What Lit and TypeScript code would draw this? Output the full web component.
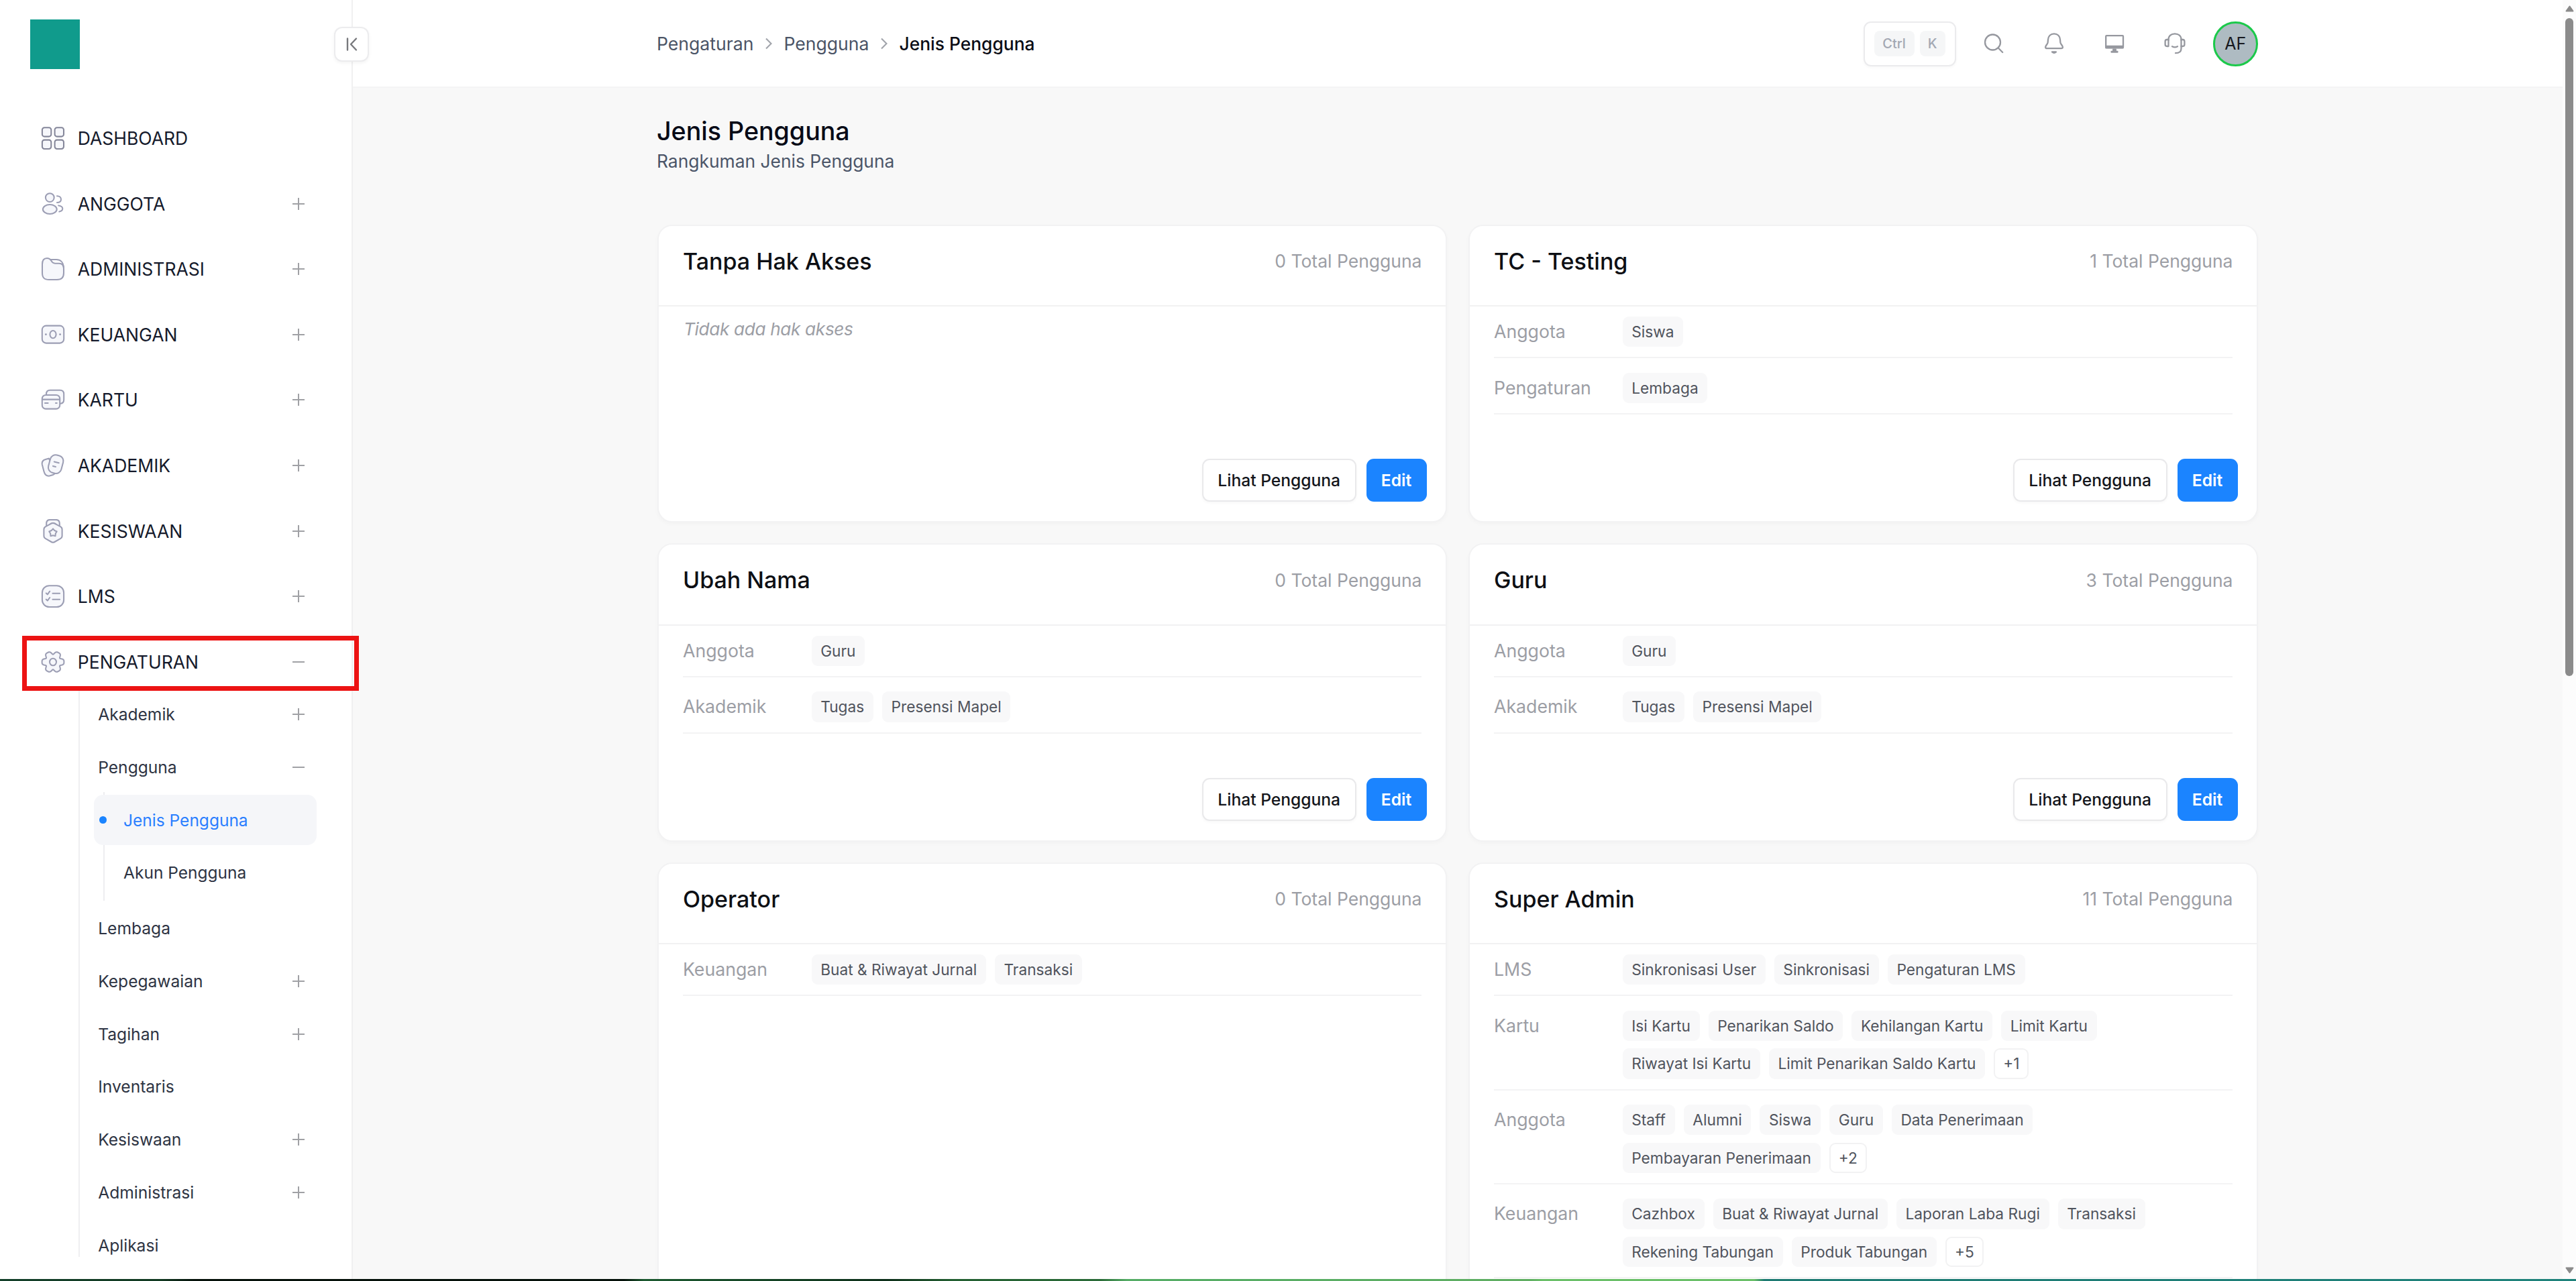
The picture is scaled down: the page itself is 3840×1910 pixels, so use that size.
import { LitElement, html, svg, css, nothing } from "lit";
import { customElement, property } from "lit/decorators.js";
import { classMap } from "lit/directives/class-map.js";

interface Access {
  label: string;
  chips: string[];
  more?: number;
}

interface Role {
  name: string;
  total: number;
  access: Access[];
  collapsed?: boolean;
}

interface MenuEntry {
  label: string;
  icon: string;
  state: "none" | "closed" | "open";
}

// Six-lobed outline for the settings icon
const gearPoints = Array.from({ length: 96 }, (_, i) => {
  const a = (i / 96) * Math.PI * 2;
  const r = 14.3 + 2.3 * Math.cos(6 * a) - 0.7 * Math.cos(12 * a);
  return `${(18 + r * 1.03 * Math.cos(a)).toFixed(2)},${(18 + r * Math.sin(a)).toFixed(2)}`;
}).join(" ");

const starPoints = Array.from({ length: 10 }, (_, i) => {
  const a = (i / 10) * Math.PI * 2 - Math.PI / 2;
  const r = i % 2 ? 4 : 6;
  return `${(18 + r * Math.cos(a)).toFixed(2)},${(20.3 + r * Math.sin(a)).toFixed(2)}`;
}).join(" ");

const icons: Record<string, unknown> = {
  dashboard: svg`<g stroke="#85879a">
    <rect x="1.9" y="2.2" width="13.4" height="13.4" rx="3.4"/><rect x="20.6" y="2.2" width="13.4" height="13.4" rx="3.4"/>
    <rect x="1.9" y="20.6" width="13.4" height="13.4" rx="3.4"/><rect x="20.6" y="20.6" width="13.4" height="13.4" rx="3.4"/></g>`,
  users: svg`<circle cx="13.3" cy="8.6" r="6.4"/><ellipse cx="13.3" cy="26" rx="10.4" ry="7"/>
    <path fill="none" d="M24 6.2c3.6 0 6 2.1 6 5s-2.4 4.8-6 4.8"/>
    <path fill="none" d="M26.2 20.4c3.8.5 6.1 2.2 6.1 4.7s-2.1 4-5 4.5"/>`,
  folder: svg`<path d="M2 11C2 4.5 4.5 2 9 2c3.5 0 4.7 1 6.2 3.6C17 8.7 18 9.7 21 9.7h6c5 0 7 3 7 8V24c0 7-3 10-10 10H12C5 34 2 31 2 24z"/>
    <path fill="none" d="M14.5 4H23c6 0 10.5 4 10.9 12"/>`,
  money: svg`<rect x="1.8" y="4.6" width="32.4" height="26" rx="6"/><ellipse cx="18" cy="17.6" rx="4.6" ry="5.6"/>
    <path d="M7.2 17.6h.4M28.4 17.6h.4" stroke-width="2.6"/>`,
  cards: svg`<path d="M8 11V9.5C8 5.5 10 3.7 13.5 3.7h15c3.8 0 5.7 2 5.7 5.8V18c0 3.5-1.6 5.4-5 5.8z"/>
    <rect x="1.8" y="11" width="26.4" height="20.6" rx="5.4"/><path d="M2 17.6h26"/>
    <path d="M6 23h4.6M22 23h1.8"/>`,
  notes: svg`<path d="M12 7.5 6.8 8.9C2.5 10.2 1 13 1.9 17l2.6 10c1.5 5.5 4.5 7.2 8.5 6.6 3.5-.5 6-1.6 8-3.6z"/>
    <rect x="12.3" y="2.6" width="19.8" height="27" rx="8" transform="rotate(15 22.2 16.1)"/>
    <path d="M19.8 12.6l7 1.7M18 18.9l4 1.1"/>`,
  medal: svg`<path d="M8.2 11V6.5C8.2 2.6 10 .9 13.8.9h8.4c3.8 0 5.6 1.7 5.6 5.6V11z"/>
    <path fill="none" d="M13.5 8c1-2.6 8-2.6 9 0"/>
    <path d="M15.5 6.6q2.5-1.4 5 0L29 11.2q2.6 1.4 2.6 4.2V25q0 2.7-2.6 4.2L20.5 34q-2.5 1.4-5 0L7 29.2Q4.4 27.7 4.4 25v-9.6q0-2.8 2.6-4.2z"/>
    <polygon points="${starPoints}"/>`,
  checklist: svg`<rect x="1.9" y="2.2" width="32.2" height="31.8" rx="10.5"/>
    <path fill="none" d="M7.8 13.4l2 1.9 3.4-4.6M7.8 22.7l2 1.9 3.4-4.6M17.5 13.7h10.6M17.5 22.7h10.6"/>`,
  gear: svg`<polygon points="${gearPoints}"/><ellipse cx="18" cy="18" rx="5" ry="5.3"/>`,
};

const menu: MenuEntry[] = [
  { label: "DASHBOARD", icon: "dashboard", state: "none" },
  { label: "ANGGOTA", icon: "users", state: "closed" },
  { label: "ADMINISTRASI", icon: "folder", state: "closed" },
  { label: "KEUANGAN", icon: "money", state: "closed" },
  { label: "KARTU", icon: "cards", state: "closed" },
  { label: "AKADEMIK", icon: "notes", state: "closed" },
  { label: "KESISWAAN", icon: "medal", state: "closed" },
  { label: "LMS", icon: "checklist", state: "closed" },
  { label: "PENGATURAN", icon: "gear", state: "open" },
];

const submenu: { label: string; state: MenuEntry["state"]; children?: string[] }[] = [
  { label: "Akademik", state: "closed" },
  { label: "Pengguna", state: "open", children: ["Jenis Pengguna", "Akun Pengguna"] },
  { label: "Lembaga", state: "none" },
  { label: "Kepegawaian", state: "closed" },
  { label: "Tagihan", state: "closed" },
  { label: "Inventaris", state: "none" },
  { label: "Kesiswaan", state: "closed" },
  { label: "Administrasi", state: "closed" },
  { label: "Aplikasi", state: "none" },
];

const guruAccess: Access[] = [
  { label: "Anggota", chips: ["Guru"] },
  { label: "Akademik", chips: ["Tugas", "Presensi Mapel"] },
];

const roles: Role[] = [
  { name: "Tanpa Hak Akses", total: 0, access: [] },
  {
    name: "TC - Testing",
    total: 1,
    access: [
      { label: "Anggota", chips: ["Siswa"] },
      { label: "Pengaturan", chips: ["Lembaga"] },
    ],
  },
  { name: "Ubah Nama", total: 0, access: guruAccess },
  { name: "Guru", total: 3, access: guruAccess },
  {
    name: "Operator",
    total: 0,
    collapsed: true,
    access: [{ label: "Keuangan", chips: ["Buat & Riwayat Jurnal", "Transaksi"] }],
  },
  {
    name: "Super Admin",
    total: 11,
    collapsed: true,
    access: [
      { label: "LMS", chips: ["Sinkronisasi User", "Sinkronisasi", "Pengaturan LMS"] },
      {
        label: "Kartu",
        chips: ["Isi Kartu", "Penarikan Saldo", "Kehilangan Kartu", "Limit Kartu", "Riwayat Isi Kartu", "Limit Penarikan Saldo Kartu"],
        more: 1,
      },
      { label: "Anggota", chips: ["Staff", "Alumni", "Siswa", "Guru", "Data Penerimaan", "Pembayaran Penerimaan"], more: 2 },
      {
        label: "Keuangan",
        chips: ["Cazhbox", "Buat & Riwayat Jurnal", "Laporan Laba Rugi", "Transaksi", "Rekening Tabungan", "Produk Tabungan"],
        more: 5,
      },
    ],
  },
];

const toggleSign = (state: MenuEntry["state"]) =>
  state === "none"
    ? nothing
    : html`<svg class="sign" viewBox="0 0 18 18" width="18" height="18">
        <path d="${state === "closed" ? "M0 9h18M9 0v18" : "M0 9h18"}" stroke="#a0a1a5" stroke-width="2" />
      </svg>`;

@customElement("side-nav")
class SideNav extends LitElement {
  static styles = css`
    :host {
      display: block;
      position: relative;
      flex: none;
      box-sizing: border-box;
      width: 526px;
      border-right: 2px solid #f0f0f1;
      background: #fff;
    }
    svg { display: block; flex: none; }
    .logo { width: 74px; height: 74.5px; margin: 28.5px 0 0 45px; background: #109b8c; }
    .collapse {
      position: absolute;
      left: 498px;
      top: 39.5px;
      box-sizing: border-box;
      width: 52px;
      height: 52px;
      border: 2px solid #ececee;
      border-radius: 12px;
      background: #fff;
      box-shadow: 0 2px 5px rgba(0, 0, 0, 0.05);
      display: grid;
      place-items: center;
    }
    .menu { display: flex; flex-direction: column; gap: 22.6px; padding-top: 65.5px; }
    .item {
      display: flex;
      align-items: center;
      height: 75px;
      padding: 0 69.7px 0 60.7px;
      color: #151a2b;
      font-size: 26.5px;
    }
    .glyph { margin-right: 19.1px; fill: #f6f7fb; stroke: #9c9eb4; stroke-width: 2.05; stroke-linecap: round; stroke-linejoin: round; }
    .sign { margin-left: auto; }
    .sub {
      display: flex;
      flex-direction: column;
      gap: 3.8px;
      padding-top: 3.2px;
      background: linear-gradient(#efeff1, #efeff1) 117px 0 / 2px calc(100% - 20px) no-repeat;
    }
    .subitem {
      display: flex;
      align-items: center;
      height: 75px;
      padding: 0 69.7px 0 146.2px;
      color: #2e3443;
      font-size: 24.6px;
    }
    .nested {
      display: flex;
      flex-direction: column;
      gap: 3.8px;
      padding-bottom: 3.8px;
      background: linear-gradient(#ededf0, #ededf0) 154px 0 / 2px 100% no-repeat;
      margin-top: -3.8px;
      padding-top: 3.8px;
    }
    .leaf {
      display: flex;
      align-items: center;
      height: 75px;
      margin: 0 52px 0 140px;
      padding-left: 44.1px;
      border-radius: 14px;
      color: #2e3443;
      font-size: 24.5px;
      box-sizing: border-box;
    }
    .leaf.active { padding-left: 8.2px; background: #f5f6f9; color: #2b7fff; }
    .leaf.active::before {
      content: "";
      width: 11px;
      height: 11.5px;
      margin-right: 24.9px;
      border-radius: 50%;
      background: #1b84ff;
    }
    .marker {
      position: absolute;
      left: 33px;
      top: 948px;
      box-sizing: border-box;
      width: 502px;
      height: 81.5px;
      border: 7px solid #ec1313;
    }
  `;
  render() {
    return html`
      <div class="logo"></div>
      <div class="collapse">
        <svg viewBox="0 0 24 24" width="24" height="24" fill="none" stroke="#78797d" stroke-width="2.4" stroke-linecap="round" stroke-linejoin="round">
          <path d="M6 3.5v17M19 3.5l-8 8.5 8 8.5" />
        </svg>
      </div>
      <nav class="menu">
        ${menu.map(
          (m) => html`<div class="item">
            <svg class="glyph" viewBox="0 0 36 36" width="36" height="36">${icons[m.icon]}</svg>
            <span>${m.label}</span>${toggleSign(m.state)}
          </div>`,
        )}
      </nav>
      <div class="sub">
        ${submenu.map(
          (s) => html`<div class="subitem"><span>${s.label}</span>${toggleSign(s.state)}</div>
            ${s.children
              ? html`<div class="nested">
                  ${s.children.map((c, i) => html`<div class=${classMap({ leaf: true, active: i === 0 })}>${c}</div>`)}
                </div>`
              : nothing}`,
        )}
      </div>
      <div class="marker"></div>
    `;
  }
}

@customElement("top-bar")
class TopBar extends LitElement {
  static styles = css`
    :host { display: block; flex: none; height: 129px; border-bottom: 2px solid #f4f4f5; background: #fff; }
    svg { display: block; flex: none; }
    .inner {
      display: flex;
      align-items: center;
      justify-content: space-between;
      width: 2387px;
      height: 130.5px;
      margin: 0 auto;
      padding-right: 1px;
    }
    .crumbs { display: flex; align-items: center; font-size: 26.6px; color: #4b5466; }
    .crumbs svg { margin: 0 16.5px; }
    .here { color: #0b0d16; font-weight: 500; font-size: 26.4px; }
    .tools { display: flex; align-items: center; }
    .keys {
      display: flex;
      align-items: center;
      gap: 8px;
      box-sizing: border-box;
      height: 67.5px;
      padding: 0 14px;
      margin-right: 38px;
      border: 2px solid #ebebed;
      border-radius: 11px;
      box-shadow: 0 2px 4px rgba(0, 0, 0, 0.03);
    }
    .key {
      display: grid;
      place-items: center;
      height: 38px;
      width: 60px;
      border-radius: 8px;
      background: #f5f6f7;
      color: #a3a8b3;
      font-size: 20px;
      font-weight: 500;
    }
    .key.single { width: 38px; }
    .icons { display: flex; gap: 54px; margin-right: 39px; }
    .icons svg { fill: none; stroke: #96989f; stroke-width: 2.3; stroke-linecap: round; stroke-linejoin: round; }
    .avatar {
      display: grid;
      place-items: center;
      box-sizing: border-box;
      width: 67.5px;
      height: 67.5px;
      border: 3px solid #1bc94a;
      border-radius: 50%;
      background: #aebbc2;
      color: #17191f;
      font-size: 25px;
    }
  `;
  render() {
    const chevron = html`<svg viewBox="0 0 12 18" width="12" height="18" fill="none" stroke="#a0a3aa" stroke-width="2.1"><path d="M2 1.5l7.5 7.5L2 16.5" /></svg>`;
    return html`<div class="inner">
      <div class="crumbs"><span>Pengaturan</span>${chevron}<span>Pengguna</span>${chevron}<span class="here">Jenis Pengguna</span></div>
      <div class="tools">
        <div class="keys"><span class="key">Ctrl</span><span class="key single">K</span></div>
        <div class="icons">
          <svg viewBox="0 0 36 36" width="36" height="36"><circle cx="16.5" cy="16" r="11.5" /><path d="M25 24.8l6.2 6.2" /></svg>
          <svg viewBox="0 0 36 36" width="36" height="36">
            <path d="M18 3.3c-5.4 0-8.6 3.7-9 8.7l-.4 4.5c-.2 2.2-3.5 4.5-3.5 6.7 0 1.3.8 1.9 2.2 1.9h21.4c1.4 0 2.2-.6 2.2-1.9 0-2.2-3.3-4.5-3.5-6.7L27 12c-.4-5-3.6-8.7-9-8.7z" />
            <path d="M15 30.5q3 2.8 6 0z" fill="#96989f" />
          </svg>
          <svg viewBox="0 0 36 36" width="36" height="36">
            <rect x="5.2" y="6.2" width="25.8" height="18" rx="1" />
            <path d="M5 21.5h26v3.2H5zM15.8 26.5h4.4v3h2.6v1.6h-9.6v-1.6h2.6z" fill="#96989f" stroke-width="1.4" />
          </svg>
          <svg viewBox="0 0 36 36" width="36" height="36">
            <path d="M8.5 13v-1C8.5 6.6 12.4 3.3 18 3.3S27.5 6.6 27.5 12v1" />
            <path d="M8.5 12H6.3C4.5 12 3.6 13 3.6 14.7v4.6c0 1.7.9 2.7 2.7 2.7h2.2z" />
            <path d="M27.5 12h2.2c1.8 0 2.7 1 2.7 2.7v4.6c0 1.7-.9 2.7-2.7 2.7h-2.2z" />
            <path d="M27.5 22v3.5c0 4.5-3.5 6.7-8.5 6.7M14 22.3c2.5 1.4 5.5 1.4 8 0" />
          </svg>
        </div>
        <div class="avatar">AF</div>
      </div>
    </div>`;
  }
}

@customElement("role-card")
class RoleCard extends LitElement {
  @property({ attribute: false }) role!: Role;
  static styles = css`
    :host {
      display: flex;
      flex-direction: column;
      box-sizing: border-box;
      min-height: 444.5px;
      border: 2px solid #f2f2f3;
      border-radius: 22px;
      background: #fff;
      box-shadow: 0 3px 6px rgba(0, 0, 0, 0.025);
    }
    .head {
      display: flex;
      align-items: center;
      justify-content: space-between;
      height: 104.5px;
      padding: 0 35.5px 14px 36px;
      border-bottom: 2px solid #f1f1f2;
    }
    .name { font-size: 34px; color: #0d0f14; font-weight: 550; }
    .total { font-size: 26.5px; color: #9c9ea5; }
    .rows { padding: 0 36px; margin-top: -7px; }
    .row { display: flex; padding: 21.6px 0 15px; border-bottom: 2px solid #f3f3f4; }
    .label { flex: none; width: 191.5px; line-height: 45px; font-size: 26.7px; color: #9c9ea5; }
    .chips { display: flex; flex-wrap: wrap; gap: 11.3px 13px; }
    .chip {
      box-sizing: border-box;
      height: 45.2px;
      line-height: 45.2px;
      padding: 0 13.7px;
      border-radius: 9px;
      background: #f8f8f9;
      color: #50545d;
      font-size: 22.7px;
      white-space: nowrap;
    }
    .more { background: #fff; border: 2px solid #f2f2f3; line-height: 41.2px; padding: 0 12px; }
    .empty { padding: 18px 37px 0; line-height: 32px; font-size: 26.2px; letter-spacing: -0.35px; font-style: italic; color: #9c9ea5; }
    .actions { display: flex; justify-content: flex-end; gap: 15px; margin-top: auto; padding: 40px 28.5px 29px; }
    .btn {
      display: grid;
      place-items: center;
      box-sizing: border-box;
      height: 64px;
      padding: 0 21.5px;
      border-radius: 11px;
      font-size: 24.6px;
      font-weight: 500;
    }
    .view { border: 2px solid #e9e9eb; color: #14161c; box-shadow: 0 2px 4px rgba(0, 0, 0, 0.03); }
    .edit { background: #1b84ff; color: #fff; font-weight: 600; padding: 0 22.3px; }
  `;
  render() {
    const { name, total, access, collapsed } = this.role;
    return html`
      <div class="head"><span class="name">${name}</span><span class="total">${total} Total Pengguna</span></div>
      ${access.length
        ? html`<div class="rows">
            ${access.map(
              (a) => html`<div class="row">
                <span class="label">${a.label}</span>
                <div class="chips">
                  ${a.chips.map((c) => html`<span class="chip">${c}</span>`)}
                  ${a.more ? html`<span class="chip more">+${a.more}</span>` : nothing}
                </div>
              </div>`,
            )}
          </div>`
        : html`<div class="empty">Tidak ada hak akses</div>`}
      ${collapsed
        ? nothing
        : html`<div class="actions"><span class="btn view">Lihat Pengguna</span><span class="btn edit">Edit</span></div>`}
    `;
  }
}

@customElement("app-root")
class AppRoot extends LitElement {
  static styles = css`
    :host {
      display: flex;
      flex-direction: column;
      width: 3840px;
      height: 1910px;
      overflow: hidden;
      background: #fff;
      font-family: Inter, "Liberation Sans", sans-serif;
    }
    .shell { display: flex; flex: 1; min-height: 0; overflow: hidden; }
    .main { display: flex; flex-direction: column; flex: 1; min-width: 0; }
    .page { flex: 1; min-height: 0; overflow: hidden; background: #f8f8f8; }
    .content { width: 2387px; margin: 0 auto; padding: 40.8px 1px 0 0; }
    .title { margin: 0; font-size: 37.6px; line-height: 48px; font-weight: 500; color: #070a16; }
    .subtitle { font-size: 26.4px; line-height: 36px; margin-top: 2.5px; color: #4b5568; }
    .grid {
      display: grid;
      grid-template-columns: 1fr 1fr;
      grid-template-rows: auto auto 760px;
      gap: 31px 32px;
      margin: 76.7px 0 0 1px;
    }
    .scroll { display: flex; flex-direction: column; align-items: center; flex: none; width: 20px; background: #fcfcfc; }
    .scroll svg { display: block; margin-top: 7.5px; }
    .thumb { width: 12.5px; height: 981px; margin: 9.5px 0 auto; border-radius: 7px; background: #8b8b8b; }
    .scroll .down { margin: 0 0 8px; }
    .edge {
      flex: none;
      height: 3.5px;
      background: linear-gradient(90deg, #14402a 0, #123a22 240px, #06120b 290px, #06120b 930px, #1c5a30 960px, #0d2f1a 1320px, #235f31 1420px, #2a6b38 1640px, #55ad66 1680px, #5fae62 2280px, #6abf68 2300px, #6abf68 2615px, #1d7a72 2630px, #1f827b 100%);
    }
  `;
  render() {
    return html`
      <div class="shell">
        <side-nav></side-nav>
        <div class="main">
          <top-bar></top-bar>
          <div class="page">
            <div class="content">
              <h1 class="title">Jenis Pengguna</h1>
              <div class="subtitle">Rangkuman Jenis Pengguna</div>
              <div class="grid">${roles.map((r) => html`<role-card .role=${r}></role-card>`)}</div>
            </div>
          </div>
        </div>
        <div class="scroll">
          <svg viewBox="0 0 13 10" width="13" height="10"><path d="M6.5 1.5L11.5 8.5H1.5z" fill="#8b8b8b" stroke="#8b8b8b" stroke-width="2" stroke-linejoin="round" /></svg>
          <div class="thumb"></div>
          <svg class="down" viewBox="0 0 13 10" width="13" height="10"><path d="M6.5 8.5L11.5 1.5H1.5z" fill="#8b8b8b" stroke="#8b8b8b" stroke-width="2" stroke-linejoin="round" /></svg>
        </div>
      </div>
      <div class="edge"></div>
    `;
  }
}
